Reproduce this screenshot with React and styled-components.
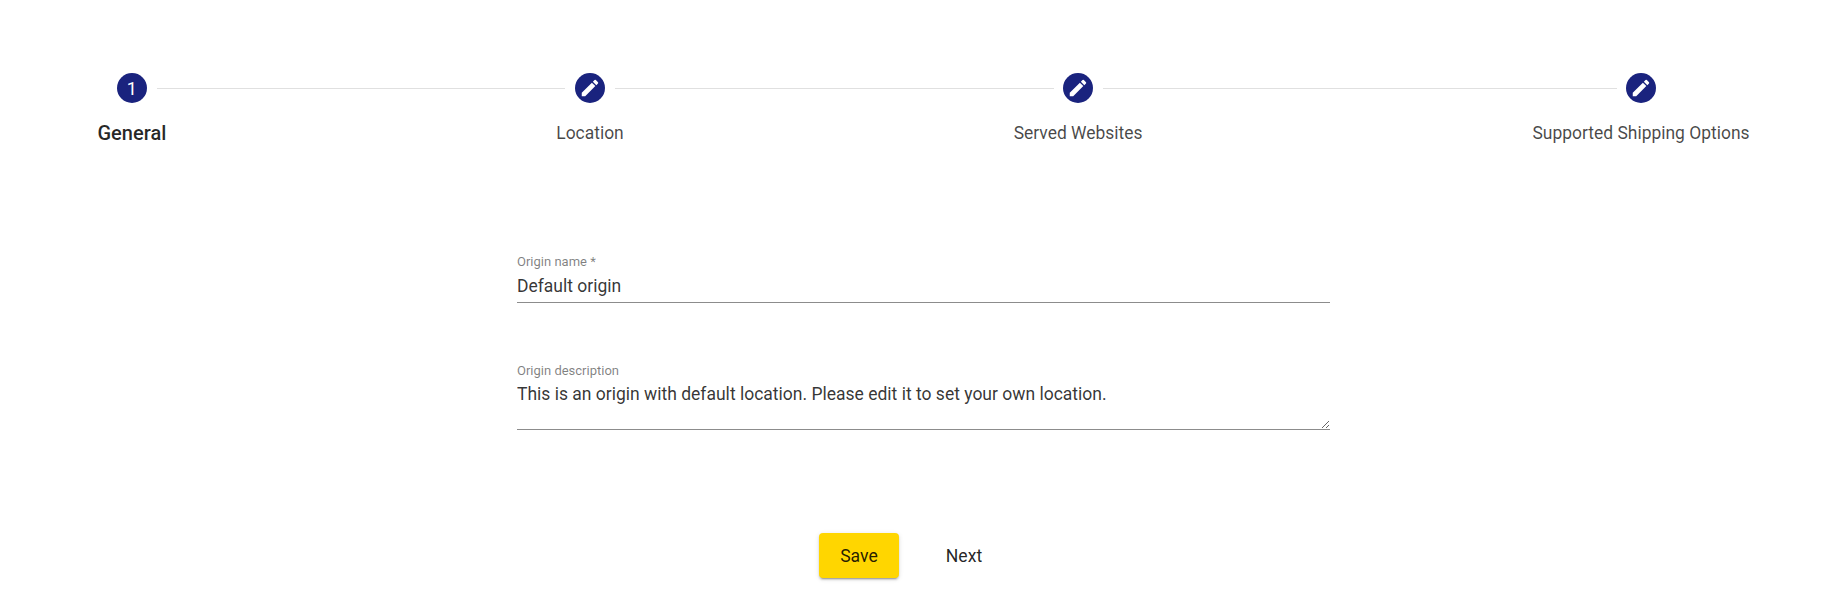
import React from "react";
import styled, { createGlobalStyle } from "styled-components";

const GlobalStyle = createGlobalStyle`
  html, body {
    margin: 0;
    background: #fff;
    font-family: Roboto, "Liberation Sans", sans-serif;
    color: rgba(0, 0, 0, 0.87);
  }
`;

const Page = styled.div`
  display: flex;
  flex-direction: column;
  height: 596px;
  overflow: hidden;
`;

const Stepper = styled.div`
  display: flex;
  align-items: flex-start;
  padding: 73px 95.5px 0 97.5px;
`;

const Step = styled.div`
  display: flex;
  flex-direction: column;
  align-items: center;
  gap: 16px;
`;

const Circle = styled.div`
  width: 30px;
  height: 30px;
  border-radius: 50%;
  background: #1a237e;
  color: #fff;
  font-size: 18px;
  display: flex;
  align-items: center;
  justify-content: center;
`;

const StepLabel = styled.div`
  font-size: ${(p) => (p.$active ? "20px" : "17.45px")};
  line-height: 28px;
  white-space: nowrap;
  font-weight: ${(p) => (p.$active ? 500 : 400)};
  color: rgba(0, 0, 0, ${(p) => (p.$active ? 0.85 : 0.72)});
`;

// label overhang past the circle sets how far the line runs under each neighbour
const Connector = styled.div`
  flex: 1 1 ${(p) => p.$from + p.$to - 20}px;
  height: 1px;
  margin: 15px ${(p) => 10 - p.$to}px 0 ${(p) => 10 - p.$from}px;
  background: #e0e0e0;
`;

const Form = styled.form`
  width: 813px;
  margin: 107px 0 0 517px;
  display: flex;
  flex-direction: column;
  gap: 60px;
`;

const Field = styled.label`
  display: flex;
  flex-direction: column;
  border-bottom: 1px solid #8c8c8c;
`;

const FieldLabel = styled.span`
  font-size: 13px;
  line-height: 15px;
  color: rgba(0, 0, 0, 0.5);
`;

const Input = styled.input`
  border: 0;
  outline: 0;
  padding: 0;
  height: 33px;
  font: 400 17.5px/25px Roboto, sans-serif;
  color: rgba(0, 0, 0, 0.8);
  background: transparent;
`;

const TextArea = styled.textarea`
  border: 0;
  outline: 0;
  padding: 4px 0 0;
  height: 51px;
  display: block;
  box-sizing: border-box;
  font: 400 17.5px/25px Roboto, sans-serif;
  color: rgba(0, 0, 0, 0.8);
  background: transparent;
  resize: vertical;
`;

const Actions = styled.div`
  display: flex;
  align-items: center;
  margin: 103px 0 0 819px;
`;

const SaveButton = styled.button`
  width: 80px;
  height: 45px;
  border: 0;
  border-radius: 4px;
  background: #ffd600;
  color: rgba(0, 0, 0, 0.87);
  font: 400 17.6px Roboto, sans-serif;
  box-shadow: 0 3px 1px -2px rgba(0, 0, 0, 0.2), 0 2px 2px 0 rgba(0, 0, 0, 0.14), 0 1px 5px 0 rgba(0, 0, 0, 0.12);
`;

const NextButton = styled.button`
  width: 80px;
  height: 45px;
  margin-left: 25px;
  border: 0;
  background: transparent;
  color: rgba(0, 0, 0, 0.87);
  font: 400 17.6px Roboto, sans-serif;
`;

const EditIcon = () => (
  <svg width="22" height="22" viewBox="0 0 24 24" fill="currentColor">
    <path d="M3 17.25V21h3.75L17.81 9.94l-3.75-3.75L3 17.25zM20.71 7.04c.39-.39.39-1.02 0-1.41l-2.34-2.34a.9959.9959 0 0 0-1.41 0l-1.83 1.83 3.75 3.75 1.83-1.83z" />
  </svg>
);

const steps = [
  { label: "General", overhang: 19 },
  { label: "Location", overhang: 19 },
  { label: "Served Websites", overhang: 50 },
  { label: "Supported Shipping Options", overhang: 94 },
];

const App = () => {
  return (
    <Page>
      <GlobalStyle />
      <Stepper>
        {steps.map((step, i) => (
          <React.Fragment key={step.label}>
            {i > 0 && <Connector $from={steps[i - 1].overhang} $to={step.overhang} />}
            <Step>
              <Circle>{i === 0 ? "1" : <EditIcon />}</Circle>
              <StepLabel $active={i === 0}>{step.label}</StepLabel>
            </Step>
          </React.Fragment>
        ))}
      </Stepper>
      <Form>
        <Field>
          <FieldLabel>Origin name *</FieldLabel>
          <Input defaultValue="Default origin" />
        </Field>
        <Field>
          <FieldLabel>Origin description</FieldLabel>
          <TextArea defaultValue="This is an origin with default location. Please edit it to set your own location." />
        </Field>
      </Form>
      <Actions>
        <SaveButton type="button">Save</SaveButton>
        <NextButton type="button">Next</NextButton>
      </Actions>
    </Page>
  );
};

export default App;
